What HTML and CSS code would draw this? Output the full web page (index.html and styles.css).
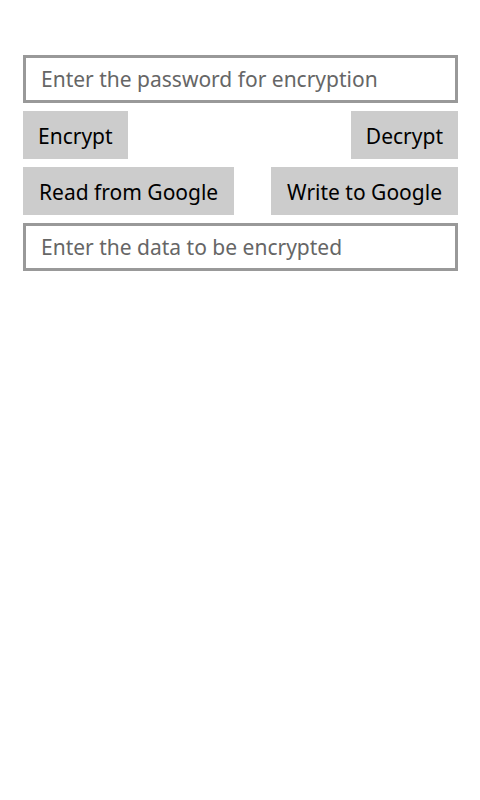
FILE: index.html
```html
<!DOCTYPE html>
<html lang="en">
<head>
<meta charset="utf-8">
<meta name="viewport" content="width=device-width, initial-scale=1">
<title>Encryption</title>
<link rel="stylesheet" href="styles.css">
</head>
<body>
<main class="page">
  <input class="field" type="text" aria-label="Password" placeholder="Enter the password for encryption">
  <div class="row">
    <button class="button" type="button">Encrypt</button>
    <button class="button" type="button">Decrypt</button>
  </div>
  <div class="row">
    <button class="button button-wide" type="button">Read from Google</button>
    <button class="button button-wide" type="button">Write to Google</button>
  </div>
  <input class="field" type="text" aria-label="Data" placeholder="Enter the data to be encrypted">
</main>
</body>
</html>
```
FILE: styles.css
```css
* {
  box-sizing: border-box;
}

body {
  margin: 0;
  background: #fff;
  font-family: "Noto Sans", "Open Sans", sans-serif;
}

.page {
  display: flex;
  flex-direction: column;
  gap: 8px;
  padding: 55px 22px 24px 23px;
}

.row {
  display: flex;
  justify-content: space-between;
}

.field,
.button {
  height: 48px;
  margin: 0;
  border-radius: 0;
  font-family: inherit;
  font-size: 21px;
  line-height: 30px;
}

.field {
  width: 100%;
  padding: 0 15px;
  border: 3px solid #999;
  background: #fff;
  color: #000;
}

.field::placeholder {
  color: #666;
  opacity: 1;
}

.button {
  padding: 2px 15px 0;
  border: 0;
  background: #ccc;
  color: #000;
  white-space: nowrap;
}

.button-wide {
  padding-right: 16px;
  padding-left: 16px;
}
```
